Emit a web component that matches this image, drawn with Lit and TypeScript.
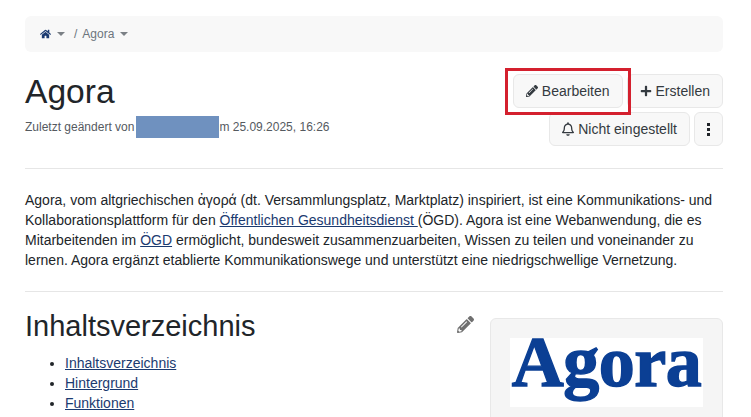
import { LitElement, html, css, svg } from "lit";
import { customElement } from "lit/decorators.js";

const icon = (vb: string, d: string, cls: string) => html`<svg class=${cls} viewBox=${vb} aria-hidden="true" fill="currentColor">${svg`<path d=${d}></path>`}</svg>`;

const HOME = "M280.37 148.26L96 300.11V464a16 16 0 0 0 16 16l112.06-.29a16 16 0 0 0 15.92-16V368a16 16 0 0 1 16-16h64a16 16 0 0 1 16 16v95.64a16 16 0 0 0 16 16.05L464 480a16 16 0 0 0 16-16V300L295.67 148.26a12.19 12.19 0 0 0-15.3 0zM571.6 251.47L488 182.56V44.05a12 12 0 0 0-12-12h-56a12 12 0 0 0-12 12v72.61L318.47 43a48 48 0 0 0-61 0L4.34 251.47a12 12 0 0 0-1.6 16.9l25.5 31A12 12 0 0 0 45.15 301l235.22-193.74a12.19 12.19 0 0 1 15.3 0L530.9 301a12 12 0 0 0 16.9-1.6l25.5-31a12 12 0 0 0-1.7-16.93z";
const PENCIL = "M497.9 142.1l-46.1 46.1c-4.7 4.7-12.3 4.7-17 0l-111-111c-4.7-4.7-4.7-12.3 0-17l46.1-46.1c18.7-18.7 49.1-18.7 67.9 0l60.1 60.1c18.8 18.7 18.8 49.1 0 67.9zM284.2 99.8L21.6 362.4.4 483.9c-2.9 16.4 11.4 30.6 27.8 27.8l121.5-21.3 262.6-262.6c4.7-4.7 4.7-12.3 0-17l-111-111c-4.8-4.7-12.4-4.7-17.1 0zM124.1 339.9c-5.5-5.5-5.5-14.3 0-19.8l154-154c5.5-5.5 14.3-5.5 19.8 0s5.5 14.3 0 19.8l-154 154c-5.5 5.5-14.3 5.5-19.8 0zM88 424h48v36.3l-64.5 11.3-31.1-31.1L51.7 376H88v48z";
const PLUS = "M416 208H272V64c0-17.67-14.33-32-32-32h-32c-17.67 0-32 14.33-32 32v144H32c-17.67 0-32 14.33-32 32v32c0 17.67 14.33 32 32 32h144v144c0 17.67 14.33 32 32 32h32c17.67 0 32-14.33 32-32V304h144c17.67 0 32-14.33 32-32v-32c0-17.67-14.33-32-32-32z";
const BELL = "M439.39 362.29c-19.32-20.76-55.47-51.99-55.47-154.29 0-77.7-54.48-139.9-127.94-155.16V32c0-17.67-14.32-32-31.98-32s-31.98 14.33-31.98 32v20.84C118.56 68.1 64.08 130.3 64.08 208c0 102.3-36.15 133.53-55.47 154.29-6 6.45-8.66 14.16-8.61 21.71.11 16.4 12.98 32 32.1 32h383.8c19.12 0 32-15.6 32.1-32 .05-7.55-2.61-15.27-8.61-21.71zM67.53 368c21.22-27.97 44.42-74.33 44.53-159.42 0-.2-.06-.38-.06-.58 0-61.86 50.14-112 112-112s112 50.14 112 112c0 .2-.06.38-.06.58.11 85.1 23.31 131.46 44.53 159.42H67.53zM224 512c35.32 0 63.97-28.65 63.97-64H160.03c0 35.35 28.65 64 63.97 64z";

@customElement("app-root")
export class AppRoot extends LitElement {
	static styles = css`
		:host {
			display: block;
			position: relative;
			height: 417px;
			overflow: hidden;
			padding: 16px 28px 0 25px;
			box-sizing: border-box;
			background: #fff;
			font-family: "Liberation Sans", Arial, sans-serif;
			font-size: 14px;
			line-height: 20px;
			color: #212529;
		}
		a {
			color: #1b3a70;
			text-decoration: underline;
		}
		.crumbs {
			display: flex;
			align-items: center;
			height: 36px;
			padding: 0 15px;
			background: #f8f8f8;
			border-radius: 6px;
			color: #6c757d;
			font-size: 12px;
		}
		.home {
			width: 11px;
			height: 10px;
			color: #1b3a70;
		}
		.caret {
			width: 0;
			height: 0;
			margin: 0 9px 0 6px;
			border: 4px solid transparent;
			border-top-color: #7b8085;
			border-bottom: 0;
		}
		.sep {
			margin-right: 5px;
		}
		.head {
			display: flex;
			justify-content: space-between;
			margin-top: 22px;
			height: 94px;
		}
		h1 {
			margin: -2px 0 0;
			font-size: 33.6px;
			font-weight: 400;
			line-height: 40px;
		}
		.meta {
			display: flex;
			align-items: center;
			height: 22px;
			margin-top: 4px;
			font-size: 12px;
			line-height: 18px;
			color: #555a5f;
		}
		.redact {
			width: 83px;
			height: 22px;
			margin-left: 2px;
			background: #6f91bf;
		}
		.actions {
			display: flex;
			flex-direction: column;
			align-items: flex-end;
			gap: 4px;
		}
		.row {
			display: flex;
			gap: 4px;
		}
		button {
			display: flex;
			align-items: center;
			gap: 4px;
			height: 34px;
			padding: 0 12px;
			background: #f8f8f8;
			border: 1px solid #e8e8e8;
			border-radius: 6px;
			font: inherit;
			color: #343a40;
		}
		.btn-icon {
			width: 12px;
			height: 12px;
		}
		.bell {
			width: 12px;
			height: 14px;
		}
		.dots {
			display: flex;
			flex-direction: column;
			gap: 2px;
		}
		.dots i {
			width: 3px;
			height: 3px;
			background: #212529;
		}
		hr {
			margin: 0;
			border: 0;
			border-top: 1px solid #e6e6e6;
		}
		.intro {
			margin: 21px 0 21px;
		}
		.toc {
			display: flex;
			margin-top: 18px;
			gap: 15px;
		}
		.toc-main {
			flex: 1;
		}
		.toc-title {
			display: flex;
			justify-content: space-between;
			align-items: flex-start;
		}
		h2 {
			margin: 0;
			font-size: 29px;
			font-weight: 400;
			line-height: 32px;
		}
		.edit {
			width: 19px;
			height: 17px;
			margin-top: 6px;
			color: #6f6f6f;
		}
		ul {
			margin: 11px 0 0;
			padding-left: 40px;
		}
		.card {
			width: 233px;
			height: 200px;
			margin-top: 8px;
			padding: 19px;
			box-sizing: border-box;
			background: #f5f5f5;
			border: 1px solid #e8e8e8;
			border-radius: 6px;
		}
		.logo {
			height: 69px;
			background: #fff;
			overflow: hidden;
			text-align: center;
			font-family: "Liberation Serif", serif;
			font-size: 72px;
			font-weight: 700;
			letter-spacing: -0.5px;
			line-height: 49px;
			color: #0b3f94;
			-webkit-text-stroke: 1.4px #0b3f94;
		}
		.mark {
			position: absolute;
			left: 505px;
			top: 68px;
			width: 126px;
			height: 47px;
			box-sizing: border-box;
			border: 3px solid #d4202e;
		}
	`;

	render() {
		return html`
			<nav class="crumbs">
				${icon("0 0 576 512", HOME, "home")}
				<span class="caret"></span>
				<span class="sep">/</span>
				<span>Agora</span>
				<span class="caret"></span>
			</nav>
			<header class="head">
				<div>
					<h1>Agora</h1>
					<div class="meta">Zuletzt geändert von<span class="redact"></span>m 25.09.2025, 16:26</div>
				</div>
				<div class="actions">
					<div class="row">
						<button>${icon("0 0 512 512", PENCIL, "btn-icon")}Bearbeiten</button>
						<button>${icon("0 0 448 512", PLUS, "btn-icon")}Erstellen</button>
					</div>
					<div class="row">
						<button>${icon("0 0 448 512", BELL, "bell")}Nicht eingestellt</button>
						<button aria-label="Mehr"><span class="dots"><i></i><i></i><i></i></span></button>
					</div>
				</div>
			</header>
			<hr />
			<p class="intro">
				Agora, vom altgriechischen ἀγορά (dt. Versammlungsplatz, Marktplatz) inspiriert, ist eine Kommunikations- und
				Kollaborationsplattform für den <a href="#">Öffentlichen Gesundheitsdienst </a>(ÖGD). Agora ist eine Webanwendung, die es
				Mitarbeitenden im <a href="#">ÖGD</a> ermöglicht, bundesweit zusammenzuarbeiten, Wissen zu teilen und voneinander zu
				lernen. Agora ergänzt etablierte Kommunikationswege und unterstützt eine niedrigschwellige Vernetzung.
			</p>
			<hr />
			<section class="toc">
				<div class="toc-main">
					<div class="toc-title">
						<h2>Inhaltsverzeichnis</h2>
						${icon("0 0 512 512", PENCIL, "edit")}
					</div>
					<ul>
						<li><a href="#">Inhaltsverzeichnis</a></li>
						<li><a href="#">Hintergrund</a></li>
						<li><a href="#">Funktionen</a></li>
					</ul>
				</div>
				<aside class="card"><div class="logo">Agora</div></aside>
			</section>
			<div class="mark"></div>
		`;
	}
}
